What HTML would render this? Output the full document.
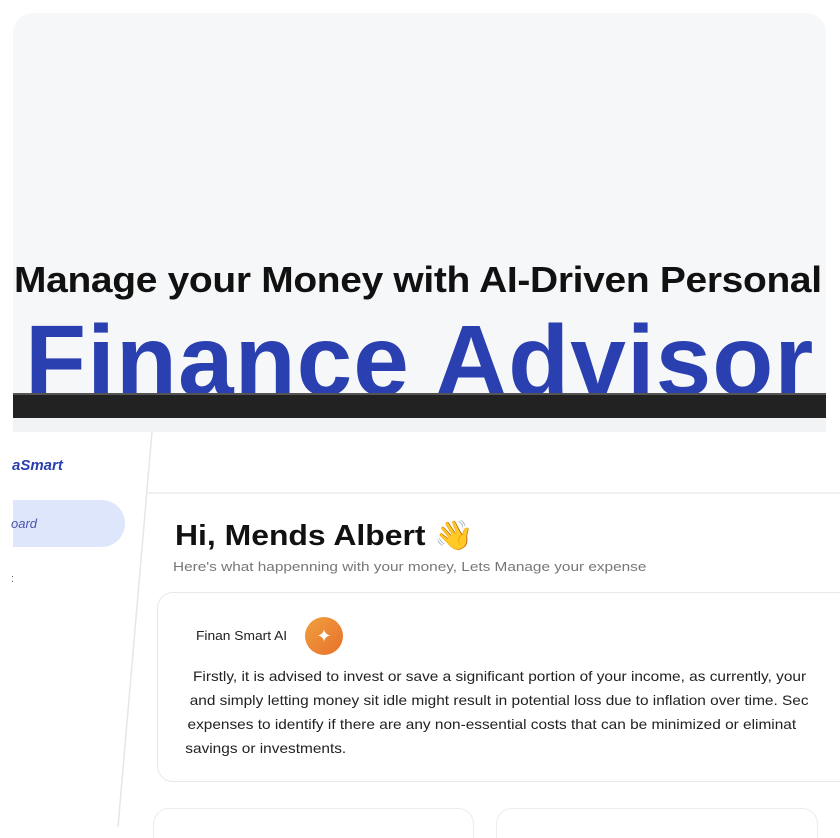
<!DOCTYPE html>
<html><head><style>
*{margin:0;padding:0;box-sizing:border-box}
html,body{width:840px;height:838px;overflow:hidden}
body{background:#fff;position:relative;font-family:"Liberation Sans",sans-serif}
.top{position:absolute;left:13px;top:13px;width:813px;height:390px;background:#f6f7f9;border-radius:20px 20px 0 0;overflow:hidden}
.h1{position:absolute;left:1px;top:246px;font-size:36.5px;font-weight:bold;color:#111;white-space:nowrap;letter-spacing:-0.3px;transform:scaleX(1.067);transform-origin:left}
.h2{position:absolute;left:12px;top:291px;font-size:100px;font-weight:bold;color:#2a3fb0;white-space:nowrap;letter-spacing:1px;transform:scaleX(1.0);transform-origin:left}
.bar{position:absolute;left:13px;top:393px;width:813px;height:25px;background:#222;border-top:2px solid #555}
.strip{position:absolute;left:13px;top:418px;width:813px;height:14px;background:#f2f3f5}
.t{position:absolute;white-space:nowrap;transform-origin:left top}
</style></head><body>
<div class="top"><div class="h1">Manage your Money with AI-Driven Personal</div><div class="h2">Finance Advisor</div></div>
<div class="bar"></div><div class="strip"></div>
<svg style="position:absolute;left:0;top:432px" width="840" height="406"><line x1="152" y1="0" x2="118" y2="395" stroke="#e6e6e6" stroke-width="1.5"/><line x1="148" y1="61" x2="840" y2="61" stroke="#ececec" stroke-width="1.5"/></svg>
<div class="t" style="left:12px;top:457px;font-size:15px;font-weight:bold;font-style:italic;color:#2a3fb0">aSmart</div>
<div style="position:absolute;left:13px;top:500px;width:112px;height:47px;background:#dde6fb;border-radius:0 24px 24px 0"></div>
<div class="t" style="left:11px;top:516px;font-size:13px;font-style:italic;color:#4a55b0">oard</div>
<div class="t" style="left:11px;top:573px;font-size:11px;color:#666">:</div>
<div class="t" style="left:175px;top:519px;font-size:29px;font-weight:bold;color:#111;transform:scaleX(1.1)">Hi, Mends Albert 👋</div>
<div class="t" style="left:173px;top:559px;font-size:13px;color:#777;transform:scaleX(1.18)">Here's what happenning with your money, Lets Manage your expense</div>
<div style="position:absolute;left:157px;top:592px;width:700px;height:190px;border:1.5px solid #e8e8e8;border-radius:16px"></div>
<div class="t" style="left:196px;top:628px;font-size:13px;color:#222;transform:scaleX(1.06)">Finan Smart AI</div>
<div style="position:absolute;left:305px;top:617px;width:38px;height:38px;border-radius:50%;background:linear-gradient(135deg,#f0a040,#e8702a);color:#fff;font-size:18px;text-align:center;line-height:38px">✦</div>
<div class="t" style="left:193px;top:664px;font-size:14px;color:#222;line-height:24px;transform:scaleX(1.1)">Firstly, it is advised to invest or save a significant portion of your income, as currently, your<br><span style="margin-left:-3px">and simply letting money sit idle might result in potential loss due to inflation over time. Sec</span><br><span style="margin-left:-5px">expenses to identify if there are any non-essential costs that can be minimized or eliminat</span><br><span style="margin-left:-7px">savings or investments.</span></div>
<div style="position:absolute;left:153px;top:808px;width:321px;height:60px;border:1.5px solid #ececec;border-radius:16px"></div>
<div style="position:absolute;left:496px;top:808px;width:322px;height:60px;border:1.5px solid #ececec;border-radius:16px"></div>
</body></html>
